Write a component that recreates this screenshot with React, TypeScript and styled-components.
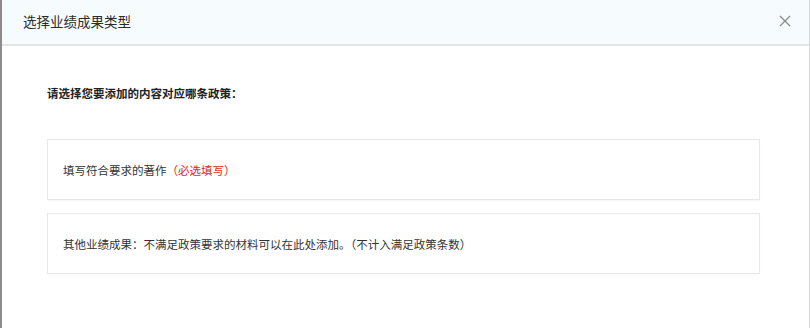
import React from "react";
import styled, { createGlobalStyle } from "styled-components";

const Global = createGlobalStyle`
  html, body { margin: 0; padding: 0; background: #fff; }
  body { font-family: "Noto Sans CJK SC", "Noto Sans", sans-serif; }
`;

const Dialog = styled.div`
  box-sizing: border-box;
  width: 810px;
  height: 328px;
  background: #fff;
  border-left: 2px solid #8c8c8c;
  border-right: 1px solid #d6d6d6;
  display: flex;
  flex-direction: column;
`;

const Header = styled.div`
  box-sizing: border-box;
  height: 46px;
  padding: 0 16px 2px 21px;
  background: #f6fcfd;
  border-bottom: 2px solid #e3e5e7;
  display: flex;
  align-items: center;
  justify-content: space-between;
`;

const Title = styled.div`
  font-size: 13.5px;
  color: #2b2b2b;
  line-height: 20px;
`;

const Close = styled.button`
  width: 16px;
  height: 16px;
  padding: 0;
  border: 0;
  background: transparent;
  display: flex;
  align-items: center;
  justify-content: center;
  color: #8a8a8a;
  cursor: pointer;
`;

const Body = styled.div`
  padding: 37px 49px 0 45px;
  display: flex;
  flex-direction: column;
`;

const Prompt = styled.div`
  font-size: 11.5px;
  font-weight: 700;
  color: #222;
  line-height: 20px;
  margin-bottom: 36px;
`;

const OptionList = styled.div`
  display: flex;
  flex-direction: column;
  gap: 13px;
`;

const Option = styled.div`
  box-sizing: border-box;
  height: 61px;
  border: 1px solid #e8e8e8;
  box-shadow: 0 1px 2px rgba(0, 0, 0, 0.03);
  padding: 0 15px;
  display: flex;
  align-items: center;
  font-size: 11.5px;
  color: #333;
  cursor: pointer;
`;

const Required = styled.span<{ $color?: string }>`
  color: ${(p) => p.$color ?? "#e01e24"};
`;

export default function App() {
  return (
    <>
      <Global />
      <Dialog>
        <Header>
          <Title>选择业绩成果类型</Title>
          <Close aria-label="关闭">
            <svg width="12" height="12" viewBox="0 0 12 12">
              <path d="M1 1L11 11M11 1L1 11" stroke="currentColor" strokeWidth="1.3" fill="none" />
            </svg>
          </Close>
        </Header>
        <Body>
          <Prompt>请选择您要添加的内容对应哪条政策：</Prompt>
          <OptionList>
            <Option>
              填写符合要求的著作<Required>（必选填写）</Required>
            </Option>
            <Option>其他业绩成果：不满足政策要求的材料可以在此处添加。（不计入满足政策条数）</Option>
          </OptionList>
        </Body>
      </Dialog>
    </>
  );
}
